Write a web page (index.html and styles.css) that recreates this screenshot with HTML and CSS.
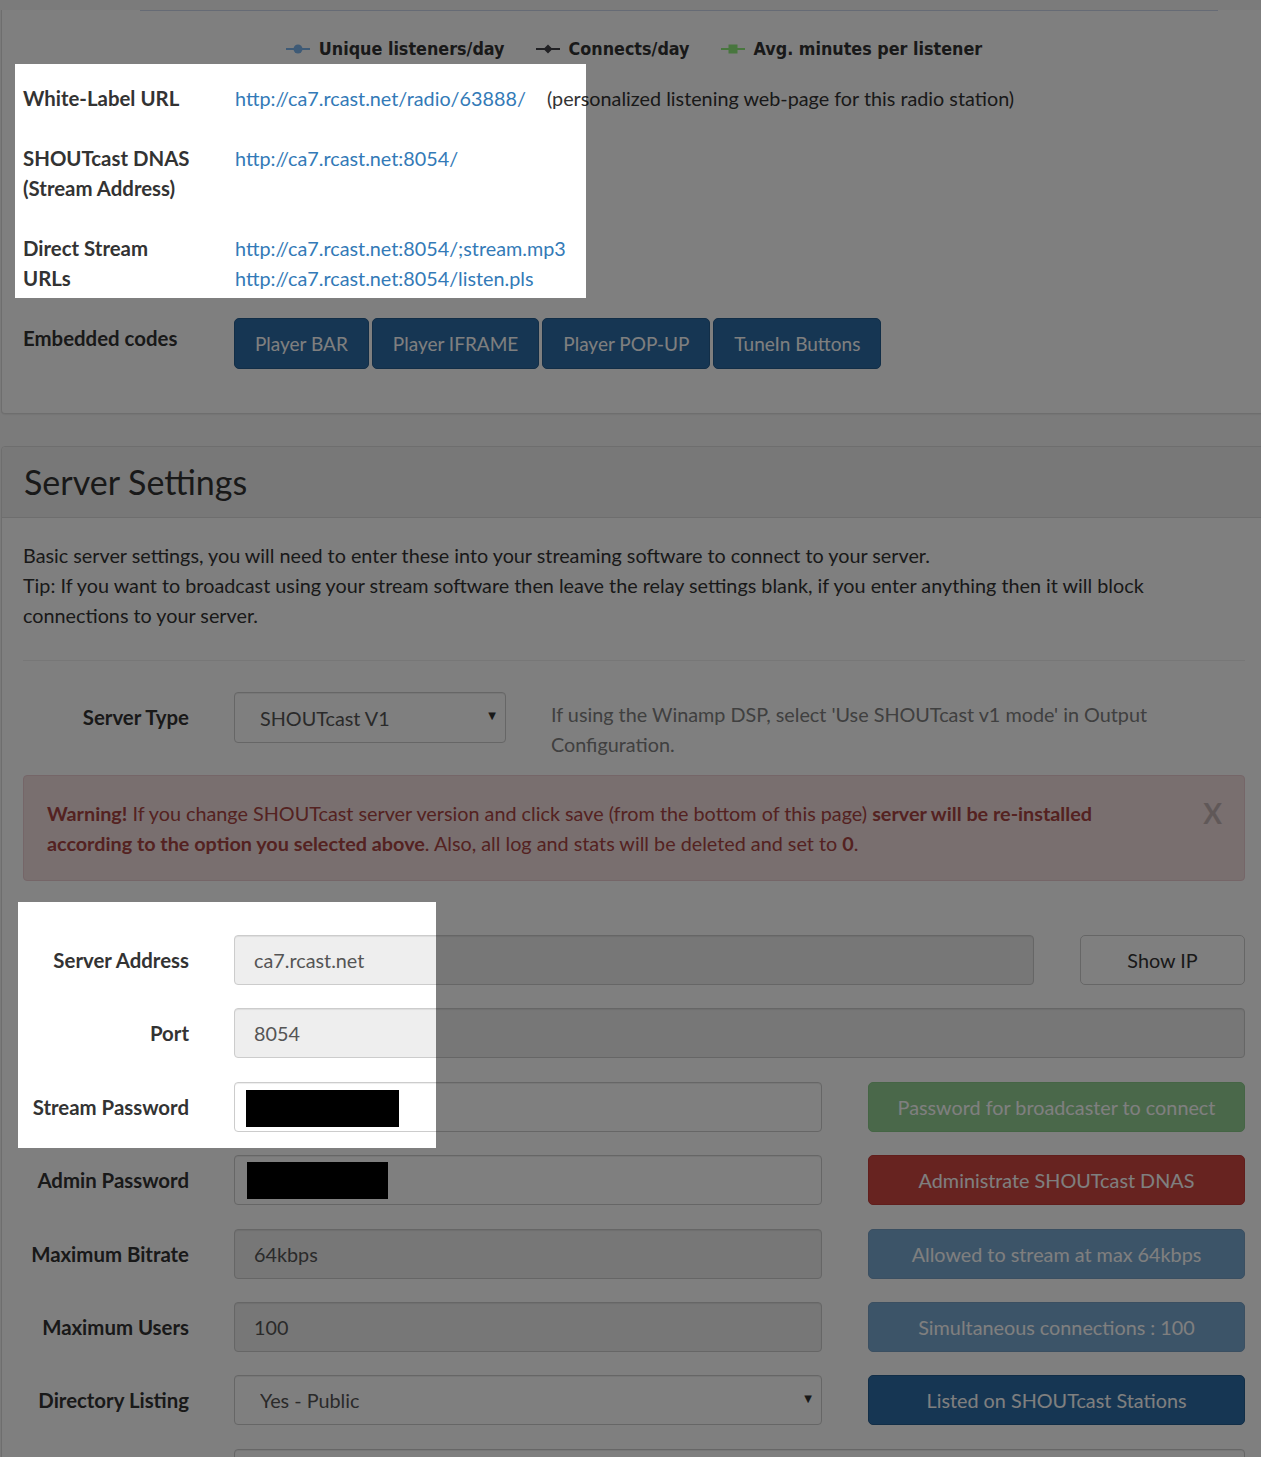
FILE: index.html
```html
<!DOCTYPE html>
<html lang="en">
<head>
    <meta charset="UTF-8">
    <meta name="viewport" content="width=device-width, initial-scale=1.0">
    <title>Server Settings</title>
    <link rel="stylesheet" href="styles.css">
</head>
<body>
    <!-- Stats panel (chart legend + station links) -->
    <div class="panel panel-stats">
        <div class="chart-axis"></div>
        <div class="legend">
            <span class="legend-item">
                <svg width="24" height="12" viewBox="0 0 24 12"><line x1="0" y1="6" x2="24" y2="6" stroke="#7cb5ec" stroke-width="2"/><circle cx="12" cy="6" r="4.5" fill="#7cb5ec"/></svg>
                Unique listeners/day
            </span>
            <span class="legend-item">
                <svg width="24" height="12" viewBox="0 0 24 12"><line x1="0" y1="6" x2="24" y2="6" stroke="#434348" stroke-width="2"/><path d="M12 1.5 L16.5 6 L12 10.5 L7.5 6 Z" fill="#434348"/></svg>
                Connects/day
            </span>
            <span class="legend-item">
                <svg width="24" height="12" viewBox="0 0 24 12"><line x1="0" y1="6" x2="24" y2="6" stroke="#90ed7d" stroke-width="2"/><rect x="7.5" y="1.5" width="9" height="9" fill="#90ed7d"/></svg>
                Avg. minutes per listener
            </span>
        </div>

        <div class="info">
            <div class="info-row">
                <div class="info-label">White-Label URL</div>
                <div class="info-value">
                    <a href="#">http://ca7.rcast.net/radio/63888/</a>
                    <span class="info-note">(personalized listening web-page for this radio station)</span>
                </div>
            </div>
            <div class="info-row">
                <div class="info-label">SHOUTcast DNAS<br>(Stream Address)</div>
                <div class="info-value"><a href="#">http://ca7.rcast.net:8054/</a></div>
            </div>
            <div class="info-row">
                <div class="info-label">Direct Stream<br>URLs</div>
                <div class="info-value">
                    <a href="#">http://ca7.rcast.net:8054/;stream.mp3</a><br>
                    <a href="#">http://ca7.rcast.net:8054/listen.pls</a>
                </div>
            </div>
            <div class="info-row info-row-embed">
                <div class="info-label">Embedded codes</div>
                <div class="btn-group">
                    <button class="btn btn-primary">Player BAR</button>
                    <button class="btn btn-primary">Player IFRAME</button>
                    <button class="btn btn-primary">Player POP-UP</button>
                    <button class="btn btn-primary">TuneIn Buttons</button>
                </div>
            </div>
        </div>
    </div>

    <!-- Server settings panel -->
    <div class="panel panel-settings">
        <div class="panel-heading">
            <h2>Server Settings</h2>
        </div>
        <div class="panel-body">
            <p class="intro">Basic server settings, you will need to enter these into your streaming software to connect to your server.<br>Tip: If you want to broadcast using your stream software then leave the relay settings blank, if you enter anything then it will block connections to your server.</p>
            <hr>

            <div class="type-row">
                <label class="form-label">Server Type</label>
                <div class="select select-type">
                    <select>
                        <option>SHOUTcast V1</option>
                        <option>SHOUTcast V2</option>
                    </select>
                </div>
                <p class="help">If using the Winamp DSP, select 'Use SHOUTcast v1 mode' in Output Configuration.</p>
            </div>

            <div class="alert">
                <p class="alert-text"><strong>Warning!</strong> If you change SHOUTcast server version and click save (from the bottom of this page) <strong>server will be re-installed according to the option you selected above</strong>. Also, all log and stats will be deleted and set to <strong>0</strong>.</p>
                <span class="alert-close">X</span>
            </div>

            <div class="form">
                <div class="form-row">
                    <label class="form-label">Server Address</label>
                    <div class="form-controls">
                        <input class="form-input" type="text" value="ca7.rcast.net" readonly>
                        <button class="btn btn-default btn-ip">Show IP</button>
                    </div>
                </div>
                <div class="form-row">
                    <label class="form-label">Port</label>
                    <div class="form-controls">
                        <input class="form-input" type="text" value="8054" readonly>
                    </div>
                </div>
                <div class="form-row">
                    <label class="form-label">Stream Password</label>
                    <div class="form-controls">
                        <div class="field">
                            <input class="form-input" type="text" value="">
                            <span class="redacted redacted-stream"></span>
                        </div>
                        <button class="btn btn-success" disabled>Password for broadcaster to connect</button>
                    </div>
                </div>
                <div class="form-row">
                    <label class="form-label">Admin Password</label>
                    <div class="form-controls">
                        <div class="field">
                            <input class="form-input" type="text" value="">
                            <span class="redacted redacted-admin"></span>
                        </div>
                        <button class="btn btn-danger">Administrate SHOUTcast DNAS</button>
                    </div>
                </div>
                <div class="form-row">
                    <label class="form-label">Maximum Bitrate</label>
                    <div class="form-controls">
                        <div class="field">
                            <input class="form-input" type="text" value="64kbps" readonly>
                        </div>
                        <button class="btn btn-primary" disabled>Allowed to stream at max 64kbps</button>
                    </div>
                </div>
                <div class="form-row">
                    <label class="form-label">Maximum Users</label>
                    <div class="form-controls">
                        <div class="field">
                            <input class="form-input" type="text" value="100" readonly>
                        </div>
                        <button class="btn btn-primary" disabled>Simultaneous connections : 100</button>
                    </div>
                </div>
                <div class="form-row">
                    <label class="form-label">Directory Listing</label>
                    <div class="form-controls">
                        <div class="field select">
                            <select>
                                <option>Yes - Public</option>
                                <option>No - Private</option>
                            </select>
                        </div>
                        <button class="btn btn-primary">Listed on SHOUTcast Stations</button>
                    </div>
                </div>
                <div class="form-row">
                    <label class="form-label"></label>
                    <div class="form-controls">
                        <input class="form-input" type="text" value="">
                    </div>
                </div>
            </div>
        </div>
    </div>

    <!-- Guided tour overlay, with the two highlighted steps cut out -->
    <div class="tour-overlay"></div>
</body>
</html>
```

FILE: styles.css
```css
html {
    overflow: hidden;
}

body {
    margin: 0;
    background-color: #f6f6f6;
    font-family: "Lato", "Noto Sans", sans-serif;
    font-size: 19.8px;
    line-height: 30px;
    color: #333;
}

a {
    color: #337ab7;
    text-decoration: none;
}

/* Panels */

.panel {
    box-sizing: border-box;
    width: 1266px;
    margin-left: 1px;
    background-color: #fff;
    border: 1px solid #ddd;
    border-radius: 4px;
    box-shadow: 0 1px 1px rgba(0, 0, 0, 0.05);
}

.panel-stats {
    border-top: none;
    border-top-left-radius: 0;
    border-top-right-radius: 0;
    padding: 0 21px 44px;
}

.panel-settings {
    margin-top: 32px;
}

.panel-heading {
    background-color: #f0f0f0;
    border-bottom: 1px solid #ddd;
    padding: 0 22px;
    border-radius: 4px 4px 0 0;
}

.panel-heading h2 {
    margin: 0;
    font-size: 34px;
    font-weight: normal;
    line-height: 70px;
}

.panel-body {
    padding: 22px 21px;
}

/* Chart remains */

.chart-axis {
    width: 1078px;
    height: 1px;
    margin: 10px 0 0 117px;
    background-color: #ccd6eb;
}

.legend {
    display: flex;
    justify-content: center;
    gap: 31px;
    margin-top: 28px;
    font-family: "DejaVu Sans Condensed", "DejaVu Sans", sans-serif;
    font-size: 17.8px;
    font-weight: bold;
    line-height: 20px;
    color: #333;
}

.legend-item {
    display: flex;
    align-items: center;
    gap: 9px;
}

/* Station info */

.info {
    margin-top: 24px;
}

.info-row {
    display: flex;
}

.info-row + .info-row {
    margin-top: 30px;
}

.info-row-embed {
    align-items: flex-start;
}

.info .info-row-embed {
    margin-top: 25px;
}

.info-label {
    width: 211px;
    flex: none;
    font-weight: bold;
    font-size: 20.4px;
}

.info-value {
    padding-left: 1px;
}

.info-row-embed .info-label {
    padding-top: 5px;
}

.info-note {
    margin-left: 16px;
}

.btn-group {
    display: flex;
    gap: 3px;
}

/* Buttons */

.btn {
    box-sizing: border-box;
    height: 50px;
    padding: 0 20px;
    border: 1px solid transparent;
    border-radius: 5px;
    font-family: inherit;
    font-size: 19.8px;
    color: #fff;
    cursor: pointer;
}

.btn-group .btn {
    height: 51px;
    padding: 0 20px;
    font-size: 19px;
}

.btn-primary {
    background-color: #2d6ca6;
    border-color: #255c8e;
}

.btn-primary:disabled {
    background-color: #337ab7;
    border-color: #2e6da4;
    opacity: 0.65;
}

.btn-success {
    background-color: #5cb85c;
    border-color: #4cae4c;
}

.btn-success:disabled {
    opacity: 0.65;
}

.btn-danger {
    background-color: #cf4641;
    border-color: #c23d38;
}

.btn-default {
    background-color: #fff;
    border-color: #ccc;
    color: #333;
}

/* Settings form */

.intro {
    margin: 0;
}

hr {
    margin: 30px 0 31px;
    border: none;
    border-top: 1px solid #eee;
}

.form-label {
    box-sizing: border-box;
    width: 166px;
    flex: none;
    margin-right: 45px;
    text-align: right;
    font-weight: bold;
    font-size: 20.4px;
}

.type-row {
    display: flex;
    align-items: flex-start;
}

.type-row .form-label {
    line-height: 51px;
}

.help {
    margin: 7px 0 0 45px;
    color: #808080;
}

.select {
    position: relative;
}

.select select {
    box-sizing: border-box;
    width: 100%;
    height: 50px;
    padding: 0 25px;
    appearance: none;
    background-color: #fff;
    border: 1px solid #ccc;
    border-radius: 4px;
    box-shadow: inset 0 1px 1px rgba(0, 0, 0, 0.075);
    font-family: inherit;
    font-size: 19.8px;
    color: #555;
}

.select::after {
    content: "\25BC";
    position: absolute;
    right: 10px;
    top: 17px;
    font-family: "DejaVu Sans", sans-serif;
    font-size: 10px;
    line-height: 14px;
    color: #333;
    pointer-events: none;
}

.select-type {
    width: 272px;
    flex: none;
}

.select-type select {
    height: 51px;
}

.alert {
    display: flex;
    gap: 30px;
    margin-top: 16px;
    padding: 22px 22px 22px 23px;
    background-color: #f2dede;
    border: 1px solid #ebccd1;
    border-radius: 4px;
    color: #a94442;
}

.alert-text {
    flex: 1;
    margin: 0;
}

.alert-close {
    font-size: 28px;
    font-weight: bold;
    color: #000;
    opacity: 0.2;
}

.form {
    margin-top: 54px;
}

.form-row {
    display: flex;
    align-items: center;
    margin-bottom: 23.4px;
}

.form-controls {
    flex: 1;
    display: flex;
    gap: 46px;
}

.form-controls > .form-input {
    flex: 1;
}

.form-controls .field {
    position: relative;
    width: 588px;
    flex: none;
}

.form-controls .field .form-input {
    width: 100%;
}

.form-controls .btn {
    flex: 1;
}

.form-controls .btn-ip {
    flex: none;
    width: 165px;
}

.form-input {
    box-sizing: border-box;
    height: 50px;
    padding: 0 19px;
    background-color: #fff;
    border: 1px solid #ccc;
    border-radius: 4px;
    box-shadow: inset 0 1px 1px rgba(0, 0, 0, 0.075);
    font-family: inherit;
    font-size: 19.8px;
    color: #555;
}

.form-input[readonly] {
    background-color: #eee;
}

/* Blacked-out secrets in the screenshot */
.redacted {
    position: absolute;
    height: 37px;
    background-color: #000;
}

.redacted-stream {
    left: 12px;
    top: 8px;
    width: 153px;
}

.redacted-admin {
    left: 13px;
    top: 7px;
    width: 141px;
}

/* Tour overlay with two highlighted holes */
.tour-overlay {
    position: absolute;
    left: 0;
    top: 0;
    width: 1261px;
    height: 1457px;
    background-color: rgba(0, 0, 0, 0.5);
    clip-path: path(evenodd, "M0 0H1261V1457H0Z M15 64H586V298H15Z M18 902H436V1148H18Z");
    z-index: 10;
}
```
